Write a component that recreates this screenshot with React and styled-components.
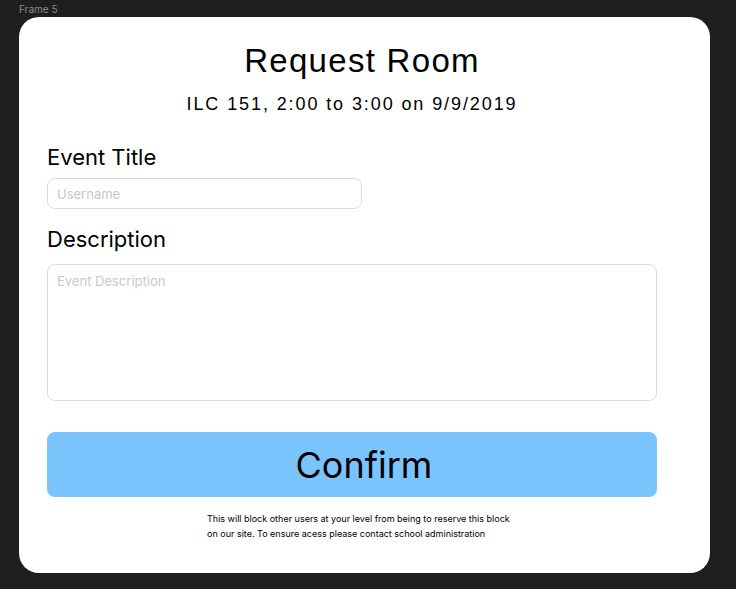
import React from "react";
import styled, { createGlobalStyle } from "styled-components";

const GlobalStyle = createGlobalStyle`
  html, body {
    margin: 0;
    padding: 0;
    background: #1e1e1e;
  }
  * { box-sizing: border-box; }
`;

const Canvas = styled.div`
  width: 736px;
  height: 589px;
  padding: 2px 0 0 19px;
  background: #1e1e1e;
  font-family: Inter, "Liberation Sans", sans-serif;
`;

const FrameLabel = styled.div`
  height: 15px;
  font-size: 10px;
  line-height: 15px;
  color: #8a8a8a;
`;

const Frame = styled.div`
  width: 691px;
  height: 556px;
  background: #ffffff;
  border-radius: 20px;
  padding: 22px 53px 0 28px;
  display: flex;
  flex-direction: column;
`;

const Title = styled.h1`
  margin: 0;
  padding-left: 20px;
  font-family: "Liberation Sans", Arial, sans-serif;
  font-weight: 400;
  font-size: 33px;
  line-height: 44px;
  letter-spacing: 1.3px;
  text-align: center;
  color: #000;
`;

const Subtitle = styled.div`
  margin-top: 9px;
  font-family: "Liberation Sans", Arial, sans-serif;
  font-size: 18px;
  line-height: 24px;
  letter-spacing: 1.9px;
  text-align: center;
  color: #000;
`;

const Label = styled.label`
  display: block;
  margin-top: ${(p) => p.$top}px;
  font-size: 22px;
  line-height: 28px;
  color: #000;
`;

const TextInput = styled.input`
  display: block;
  margin-top: 7px;
  width: ${(p) => p.$width}px;
  height: 31px;
  padding: 0 9px;
  border: 1px solid #d8dce2;
  border-radius: 8px;
  font-family: Inter, "Liberation Sans", sans-serif;
  font-size: 13px;
  outline: none;
  &::placeholder { color: #c4c9d1; }
`;

const TextArea = styled.textarea`
  display: block;
  margin-top: 11px;
  width: 100%;
  height: 137px;
  padding: 8px 9px;
  border: 1px solid #d8dce2;
  border-radius: 8px;
  font-family: Inter, "Liberation Sans", sans-serif;
  font-size: 13px;
  resize: none;
  outline: none;
  &::placeholder { color: #c4c9d1; }
`;

const ConfirmButton = styled.button`
  margin-top: 31px;
  width: 100%;
  height: 65px;
  padding: 0 0 0 24px;
  border: none;
  border-radius: 8px;
  background: #7ac4fd;
  font-family: Inter, "Liberation Sans", sans-serif;
  font-size: 36px;
  color: #000;
  cursor: pointer;
`;

const Note = styled.p`
  margin: 14px 0 0 160px;
  width: 312px;
  font-size: 9px;
  line-height: 15px;
  color: #000;
`;

export default function App() {
  return (
    <>
      <GlobalStyle />
      <Canvas>
        <FrameLabel>Frame 5</FrameLabel>
        <Frame>
          <Title>Request Room</Title>
          <Subtitle>ILC 151, 2:00 to 3:00 on 9/9/2019</Subtitle>
          <Label $top={27}>Event Title</Label>
          <TextInput $width={315} placeholder="Username" />
          <Label $top={16}>Description</Label>
          <TextArea placeholder="Event Description" />
          <ConfirmButton>Confirm</ConfirmButton>
          <Note>
            This will block other users at your level from being to reserve this
            block on our site. To ensure acess please contact school administration
          </Note>
        </Frame>
      </Canvas>
    </>
  );
}
